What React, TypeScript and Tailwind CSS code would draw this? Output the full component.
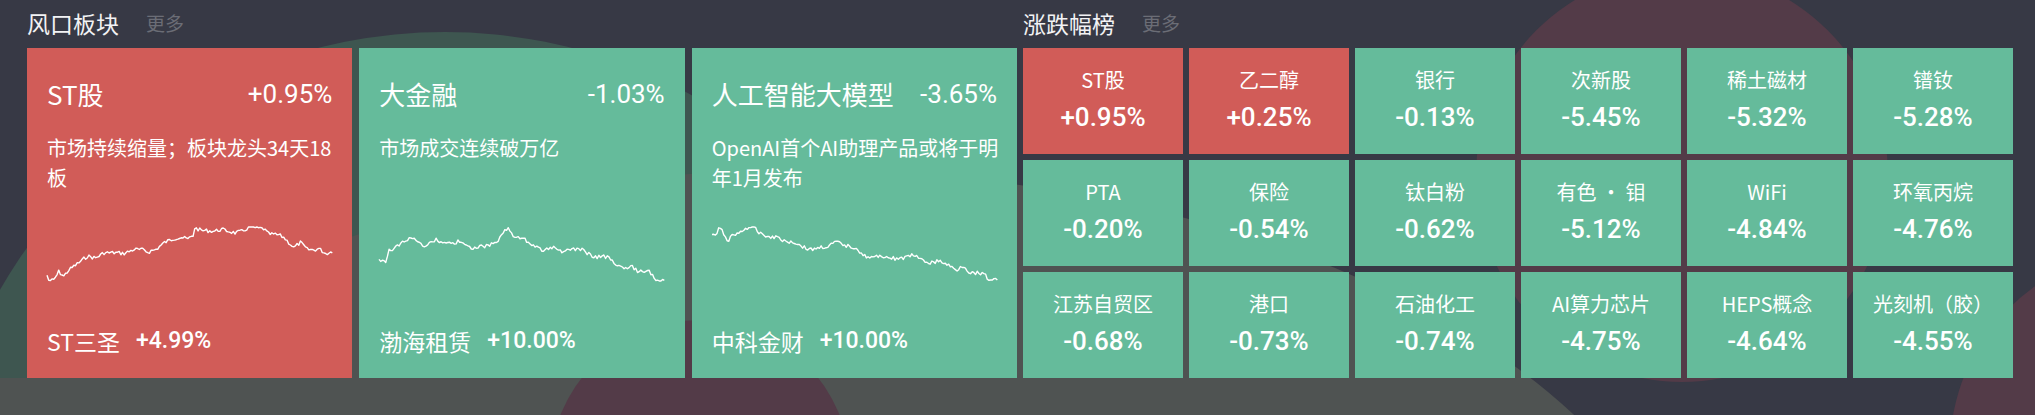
import React from "react";

type Spark = { pts: [number, number][]; xr: [number, number]; yr: [number, number]; seed: number };

const cards = [
  {
    name: "ST股",
    pct: "+0.95%",
    desc: "市场持续缩量；板块龙头34天18板",
    lead: "ST三圣",
    leadPct: "+4.99%",
    bg: "bg-[#d15c58]",
    spark: {
      seed: 7,
      xr: [140, 990],
      yr: [85, 242],
      pts: [
        [140, 225], [145, 240], [160, 240], [175, 215], [190, 228], [205, 210], [240, 185], [260, 170],
        [285, 175], [310, 160], [350, 160], [370, 162], [400, 150], [430, 152], [440, 158], [465, 150],
        [490, 130], [520, 118], [540, 115], [560, 120], [575, 110], [580, 88], [600, 95], [640, 97],
        [660, 92], [700, 102], [720, 98], [745, 85], [765, 88], [785, 90], [800, 105], [830, 108],
        [845, 115], [875, 145], [895, 130], [915, 150], [935, 152], [950, 148], [970, 162], [985, 158],
        [990, 160],
      ],
    } as Spark,
  },
  {
    name: "大金融",
    pct: "-1.03%",
    desc: "市场成交连续破万亿",
    lead: "渤海租赁",
    leadPct: "+10.00%",
    bg: "bg-[#65bb9b]",
    spark: {
      seed: 19,
      xr: [848, 1483],
      yr: [262, 422],
      pts: [
        [848, 358], [860, 360], [862, 368], [870, 330], [878, 335], [885, 322], [900, 305], [918, 292],
        [940, 315], [955, 318], [975, 298], [990, 312], [1005, 305], [1015, 315], [1025, 300], [1040, 312],
        [1050, 325], [1070, 320], [1090, 318], [1110, 305], [1120, 290], [1130, 265], [1140, 272],
        [1150, 295], [1170, 295], [1185, 315], [1210, 330], [1240, 320], [1255, 335], [1280, 330],
        [1295, 325], [1310, 340], [1330, 350], [1355, 350], [1375, 372], [1395, 390], [1408, 372],
        [1420, 390], [1440, 400], [1448, 388], [1462, 418], [1483, 420],
      ],
    } as Spark,
  },
  {
    name: "人工智能大模型",
    pct: "-3.65%",
    desc: "OpenAI首个AI助理产品或将于明年1月发布",
    lead: "中科金财",
    leadPct: "+10.00%",
    bg: "bg-[#65bb9b]",
    spark: {
      seed: 31,
      xr: [93, 940],
      yr: [685, 843],
      pts: [
        [93, 707], [108, 707], [113, 688], [125, 700], [140, 725], [150, 712], [175, 702], [190, 690],
        [215, 685], [230, 698], [255, 712], [290, 715], [310, 727], [340, 730], [360, 742], [385, 752],
        [410, 745], [440, 742], [462, 728], [480, 738], [520, 745], [545, 770], [570, 775], [600, 770],
        [620, 775], [640, 778], [670, 775], [690, 765], [712, 782], [740, 790], [770, 785], [800, 800],
        [818, 812], [838, 797], [860, 820], [885, 818], [900, 822], [915, 838], [940, 840],
      ],
    } as Spark,
  },
];

const tiles = [
  { name: "ST股", pct: "+0.95%", bg: "bg-[#d15c58]" },
  { name: "乙二醇", pct: "+0.25%", bg: "bg-[#d15c58]" },
  { name: "银行", pct: "-0.13%", bg: "bg-[#65bb9b]" },
  { name: "次新股", pct: "-5.45%", bg: "bg-[#65bb9b]" },
  { name: "稀土磁材", pct: "-5.32%", bg: "bg-[#65bb9b]" },
  { name: "镨钕", pct: "-5.28%", bg: "bg-[#65bb9b]" },
  { name: "PTA", pct: "-0.20%", bg: "bg-[#65bb9b]" },
  { name: "保险", pct: "-0.54%", bg: "bg-[#65bb9b]" },
  { name: "钛白粉", pct: "-0.62%", bg: "bg-[#65bb9b]" },
  { name: "有色 · 钼", pct: "-5.12%", bg: "bg-[#65bb9b]" },
  { name: "WiFi", pct: "-4.84%", bg: "bg-[#65bb9b]" },
  { name: "环氧丙烷", pct: "-4.76%", bg: "bg-[#65bb9b]" },
  { name: "江苏自贸区", pct: "-0.68%", bg: "bg-[#65bb9b]" },
  { name: "港口", pct: "-0.73%", bg: "bg-[#65bb9b]" },
  { name: "石油化工", pct: "-0.74%", bg: "bg-[#65bb9b]" },
  { name: "AI算力芯片", pct: "-4.75%", bg: "bg-[#65bb9b]" },
  { name: "HEPS概念", pct: "-4.64%", bg: "bg-[#65bb9b]" },
  { name: "光刻机（胶）", pct: "-4.55%", bg: "bg-[#65bb9b]" },
];

// build a jittery stock line from a few key points
function sparkPoints(sp: Spark, w: number, h: number) {
  let s = sp.seed;
  const rnd = () => {
    s = (s * 9301 + 49297) % 233280;
    return s / 233280;
  };
  const norm = sp.pts.map(([x, y]) => [
    (x - sp.xr[0]) / (sp.xr[1] - sp.xr[0]),
    (y - sp.yr[0]) / (sp.yr[1] - sp.yr[0]),
  ]);
  const out: string[] = [];
  const N = 170;
  let j = 0;
  for (let i = 0; i <= N; i++) {
    const t = i / N;
    while (j < norm.length - 2 && norm[j + 1][0] < t) j++;
    const [x0, y0] = norm[j];
    const [x1, y1] = norm[j + 1];
    const f = x1 === x0 ? 0 : Math.min(1, Math.max(0, (t - x0) / (x1 - x0)));
    let y = y0 + (y1 - y0) * f;
    if (i > 0 && i < N) y += (rnd() - 0.5) * 0.07;
    y = Math.min(1, Math.max(0, y));
    out.push(`${(t * w).toFixed(1)},${(y * h).toFixed(1)}`);
  }
  return out.join(" ");
}

function Sparkline({ spark }: { spark: Spark }) {
  return (
    <svg className="block h-[54px] w-full overflow-visible" viewBox="0 0 285 54" preserveAspectRatio="none">
      <polyline
        points={sparkPoints(spark, 285, 54)}
        fill="none"
        stroke="#ffffff"
        strokeWidth="1.4"
        strokeLinejoin="round"
        vectorEffect="non-scaling-stroke"
      />
    </svg>
  );
}

function SectionTitle({ title }: { title: string }) {
  return (
    <div className="flex h-12 items-center pb-[3px]">
      <span className="text-[23px] leading-[30px] text-[#f2f2f4]">{title}</span>
      <span className="ml-[27px] text-[19px] leading-[30px] text-[#6b6d76]">更多</span>
    </div>
  );
}

export default function App() {
  return (
    <div className="relative h-[415px] w-full overflow-hidden bg-[#373945] font-['Noto_Sans_CJK_SC',sans-serif]">
      {/* blurred background blobs */}
      <div aria-hidden className="pointer-events-none absolute inset-0">
        <div className="absolute left-[-68px] top-[32px] h-[1026px] w-[1026px] rounded-full bg-[#3e5650]" />
        <div className="absolute left-[-100px] top-[170px] h-[1000px] w-[1800px] rounded-[50%] bg-[#4f5352]" />
        <div className="absolute left-[550px] top-[320px] h-[300px] w-[300px] rounded-full bg-[#533b48]" />
        <div className="absolute left-[1476px] top-[-30px] h-[412px] w-[412px] rounded-full bg-[#533b48]" />
        <div className="absolute left-[1950px] top-[250px] h-[400px] w-[400px] rounded-full bg-[#533b48]" />
        <div className="absolute bottom-0 left-0 h-[37px] w-[560px] bg-[#4f5352]" />
      </div>

      <div className="relative flex gap-[6px] pl-[27px] pr-[22px]">
        {/* 风口板块 */}
        <div className="w-[990px]">
          <SectionTitle title="风口板块" />
          <div className="grid grid-cols-3 gap-[7px]">
            {cards.map((c) => (
              <div key={c.name} className={`flex h-[330px] flex-col px-5 pt-7 text-white ${c.bg}`}>
                <div className="flex h-9 items-center justify-between">
                  <span className="text-[26px] leading-9">{c.name}</span>
                  <span className="font-['Roboto',sans-serif] text-[26px] leading-9">{c.pct}</span>
                </div>
                <p className="mr-[-12px] mt-[21px] h-[60px] text-[20px] leading-[30px]">{c.desc}</p>
                <div className="mt-[34px]">
                  <Sparkline spark={c.spark} />
                </div>
                <div className="mt-[46px] flex h-7 items-center text-[23px] leading-7">
                  <span>{c.lead}</span>
                  <span className="ml-4 font-['Roboto',sans-serif] font-medium">{c.leadPct}</span>
                </div>
              </div>
            ))}
          </div>
        </div>

        {/* 涨跌幅榜 */}
        <div className="w-[990px]">
          <SectionTitle title="涨跌幅榜" />
          <div className="grid grid-cols-6 grid-rows-3 gap-[6px]">
            {tiles.map((t) => (
              <div
                key={t.name}
                className={`flex h-[106px] flex-col items-center justify-center gap-[6px] pb-[2px] text-white ${t.bg}`}
              >
                <span className="text-[20px] leading-7">{t.name}</span>
                <span className="font-['Roboto',sans-serif] text-[26px] font-medium leading-[34px]">{t.pct}</span>
              </div>
            ))}
          </div>
        </div>
      </div>
    </div>
  );
}
